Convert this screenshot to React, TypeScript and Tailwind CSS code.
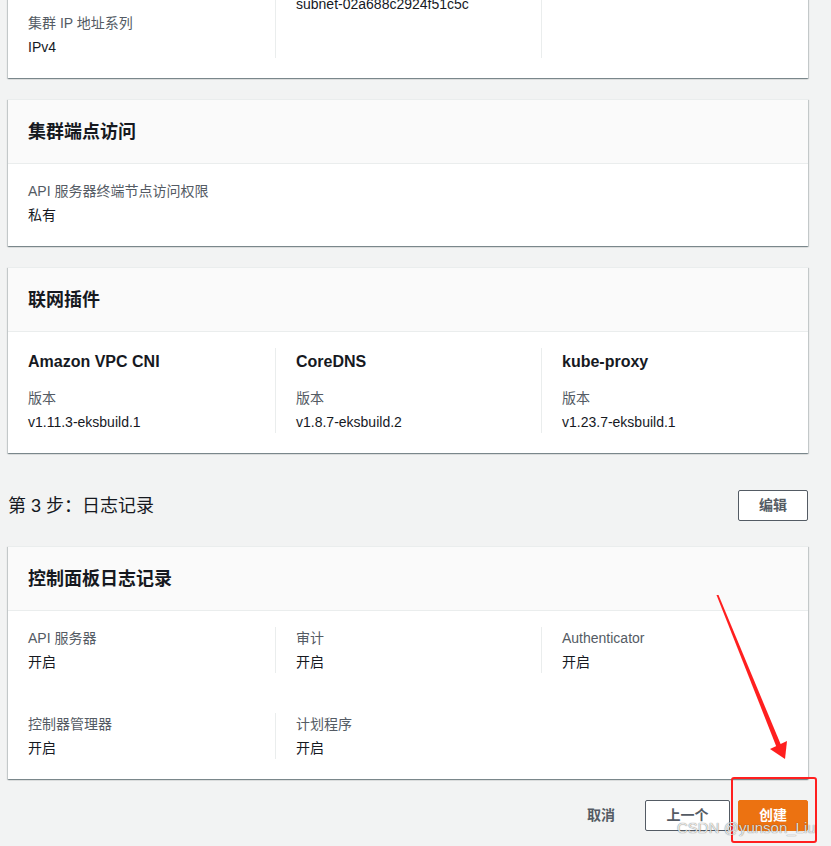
import React from "react";

const font = { fontFamily: '"Liberation Sans", "Noto Sans CJK SC", sans-serif' };

const cardCls =
  "bg-white border-t border-[#eaeded] shadow-[0_1px_1px_0_rgba(0,28,36,0.3),1px_1px_1px_0_rgba(0,28,36,0.15),-1px_1px_1px_0_rgba(0,28,36,0.15)]";

const CardHeader: React.FC<{ title: string }> = ({ title }) => (
  <div className="h-[64px] flex items-center px-5 bg-[#fafafa] border-b border-[#eaeded]">
    <h2 className="text-[18px] font-bold text-[#16191f] leading-[26px]">{title}</h2>
  </div>
);

const KeyValue: React.FC<{ label: string; value: string }> = ({ label, value }) => (
  <div>
    <div className="text-[14px] leading-[22px] text-[#545b64]">{label}</div>
    <div className="text-[14px] leading-[22px] text-[#16191f] mt-[2px]">{value}</div>
  </div>
);

const Columns: React.FC<{ cols: React.ReactNode[]; divider3?: boolean }> = ({ cols, divider3 = true }) => (
  <div className="flex">
    <div className="w-[247px]">{cols[0]}</div>
    <div className="w-[266px] border-l border-[#eaeded] pl-5">{cols[1]}</div>
    <div className={"flex-1 pl-5 " + (divider3 ? "border-l border-[#eaeded]" : "border-l border-transparent")}>
      {cols[2]}
    </div>
  </div>
);

const Addon: React.FC<{ name: string; version: string }> = ({ name, version }) => (
  <div>
    <div className="text-[16px] leading-[28px] font-bold text-[#16191f]">{name}</div>
    <div className="text-[14px] leading-[22px] text-[#545b64] mt-[11px]">版本</div>
    <div className="text-[14px] leading-[22px] text-[#16191f] mt-[2px]">{version}</div>
  </div>
);

export default function App() {
  return (
    <div className="relative min-h-screen bg-[#f2f3f3] overflow-hidden" style={font}>
      <div className="pl-2 w-[808px]">
        {/* cluster config (scrolled, top is cut off) */}
        <div className={cardCls + " -mt-[9px] px-5 pb-5"}>
          <Columns
            cols={[
              <div className="pt-[20px]">
                <KeyValue label="集群 IP 地址系列" value="IPv4" />
              </div>,
              <div className="text-[14px] leading-[22px] text-[#16191f] h-[66px] pt-[1px]">subnet-02a688c2924f51c5c</div>,
              <div />,
            ]}
          />
        </div>

        <div className={cardCls + " mt-[21px]"}>
          <CardHeader title="集群端点访问" />
          <div className="px-5 pt-4 pb-5">
            <KeyValue label="API 服务器终端节点访问权限" value="私有" />
          </div>
        </div>

        <div className={cardCls + " mt-[21px]"}>
          <CardHeader title="联网插件" />
          <div className="px-5 pt-4 pb-5">
            <Columns
              cols={[
                <Addon name="Amazon VPC CNI" version="v1.11.3-eksbuild.1" />,
                <Addon name="CoreDNS" version="v1.8.7-eksbuild.2" />,
                <Addon name="kube-proxy" version="v1.23.7-eksbuild.1" />,
              ]}
            />
          </div>
        </div>

        <div className="mt-[37px] flex items-center justify-between">
          <h2 className="text-[18px] leading-[26px] text-[#16191f] font-normal">第 3 步：日志记录</h2>
          <button className="h-[31px] w-[70px] border border-[#545b64] rounded-[2px] bg-white text-[14px] font-bold text-[#545b64]">
            编辑
          </button>
        </div>

        <div className={cardCls + " mt-[25px]"}>
          <CardHeader title="控制面板日志记录" />
          <div className="px-5 pt-4 pb-5">
            <Columns
              cols={[
                <KeyValue label="API 服务器" value="开启" />,
                <KeyValue label="审计" value="开启" />,
                <KeyValue label="Authenticator" value="开启" />,
              ]}
            />
            <div className="mt-10">
              <Columns
                divider3={false}
                cols={[
                  <KeyValue label="控制器管理器" value="开启" />,
                  <KeyValue label="计划程序" value="开启" />,
                  <div />,
                ]}
              />
            </div>
          </div>
        </div>

        <div className="mt-[21px] flex justify-end items-center gap-2">
          <button className="h-[31px] px-5 mr-[2px] text-[14px] font-bold text-[#545b64]">取消</button>
          <button className="h-[31px] w-[85px] border border-[#545b64] rounded-[2px] bg-white text-[14px] font-bold text-[#545b64]">
            上一个
          </button>
          <button className="h-[31px] w-[70px] border border-[#ec7211] rounded-[2px] bg-[#ec7211] text-[14px] font-bold text-white">
            创建
          </button>
        </div>
      </div>

      {/* screenshot annotation */}
      <svg className="absolute left-0 top-0 pointer-events-none" width="831" height="846" viewBox="0 0 831 846">
        <rect x="732" y="778" width="84" height="64" rx="2" fill="none" stroke="#ff1f1f" strokeWidth="2" />
        <polygon points="716.5,595 718.5,595 781,745 776.5,747" fill="#ff1f1f" />
        <polygon points="770,749 787,741 785,759" fill="#ff1f1f" />
      </svg>
      <div className="absolute left-[677px] top-[818px] text-[15px] leading-[20px] text-[rgba(255,255,255,0.85)] [text-shadow:0_0_1px_rgba(0,0,0,0.7)] pointer-events-none">
        CSDN @yunson_Liu
      </div>
    </div>
  );
}
